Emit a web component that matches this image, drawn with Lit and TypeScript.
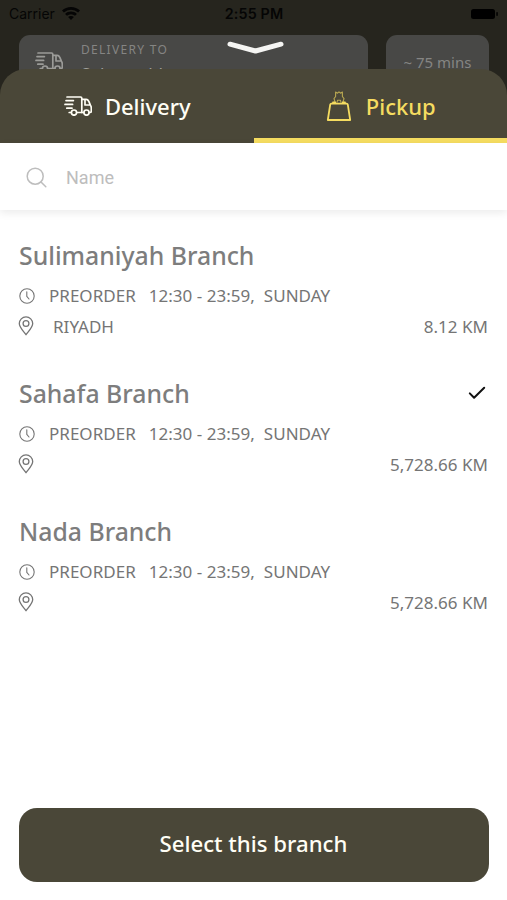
import { LitElement, html, css, svg, nothing } from "lit";
import { customElement, property, state } from "lit/decorators.js";
import { classMap } from "lit/directives/class-map.js";

interface Branch {
  name: string;
  hours: string;
  day: string;
  city: string;
  distance: string;
}

const BRANCHES: Branch[] = [
  { name: "Sulimaniyah Branch", hours: "12:30 - 23:59,", day: "SUNDAY", city: "RIYADH", distance: "8.12 KM" },
  { name: "Sahafa Branch", hours: "12:30 - 23:59,", day: "SUNDAY", city: "", distance: "5,728.66 KM" },
  { name: "Nada Branch", hours: "12:30 - 23:59,", day: "SUNDAY", city: "", distance: "5,728.66 KM" },
];

const truckShapes = svg`
  <path d="M3 1H16.6Q17.8 1 17.8 2.2V16.5H12.8M7.2 16.5H5.2M2 4.6H9.4M1 8.4H8.6M2.8 12.2H8" />
  <path d="M17.8 3.4H22.2C23.6 3.4 24.2 4.2 24.8 5.4L26.4 9.2C27 10 27.3 10.8 27.3 12V15.3Q27.3 16.5 26 16.5H25.2M19.8 16.5H17.8M21 3.6V9H26.2" />
  <circle cx="10" cy="16.6" r="2.6" />
  <circle cx="22.5" cy="16.6" r="2.6" />
`;

const truckIcon = html`<svg class="truck" viewBox="0 0 28 20">${truckShapes}</svg>`;

@customElement("branch-item")
export class BranchItem extends LitElement {
  @property({ attribute: false }) branch!: Branch;
  @property({ type: Boolean }) selected = false;

  static styles = css`
    :host { display: block; height: 138px; color: #757575; }
    .title { display: flex; align-items: center; justify-content: space-between; height: 36px; }
    .name { font-size: 24.8px; font-weight: 500; line-height: 34px; padding-bottom: 2px; color: #7d7d7d; }
    .line { display: flex; align-items: center; height: 30px; font-size: 17px; letter-spacing: 0.02px; white-space: pre; }
    .hours-line { margin-top: 7px; }
    .hours-line span { line-height: 22px; }
    svg { fill: none; stroke: currentColor; stroke-linecap: round; stroke-linejoin: round; flex: none; }
    .clock { width: 16px; height: 16px; margin-right: 14px; margin-top: -1px; stroke-width: 1.1; }
    .pin { width: 16px; height: 20px; margin-left: -1px; margin-right: 19px; stroke-width: 1.3; }
    .check { width: 18px; height: 14px; margin-right: 2px; margin-top: -2px; color: #111; stroke-width: 2; }
    .hours { margin-left: 13px; }
    .day { margin-left: 9px; }
    .distance { margin-left: auto; }
  `;

  render() {
    const b = this.branch;
    return html`
      <div class="title">
        <span class="name">${b.name}</span>
        ${this.selected
          ? html`<svg class="check" viewBox="0 0 18 14"><path d="M1.8 7.4L6.1 11.7L16.2 1.8" /></svg>`
          : nothing}
      </div>
      <div class="line hours-line">
        <svg class="clock" viewBox="0 0 16 16"><circle cx="8" cy="8" r="7.2" /><path d="M7.8 3.8V8.4L10 11" /></svg>
        <span>PREORDER</span><span class="hours">${b.hours}</span><span class="day">${b.day}</span>
      </div>
      <div class="line">
        <svg class="pin" viewBox="0 0 16 20">
          <path d="M8 18.8C6.6 16.2 1.3 11.9 1.3 7.6A6.7 6.7 0 0 1 14.7 7.6C14.7 11.9 9.4 16.2 8 18.8Z" />
          <circle cx="8" cy="7.5" r="2.9" />
        </svg>
        <span>${b.city}</span><span class="distance">${b.distance}</span>
      </div>
    `;
  }
}

@customElement("app-root")
export class AppRoot extends LitElement {
  @state() private mode: "delivery" | "pickup" = "pickup";
  @state() private selected = 1;

  static styles = css`
    :host {
      display: flex; flex-direction: column; height: 900px; overflow: hidden;
      background: #fff; font-family: "Noto Sans", "Open Sans", sans-serif;
    }
    * { box-sizing: border-box; }
    svg { fill: none; stroke: currentColor; stroke-linecap: round; stroke-linejoin: round; flex: none; }
    .backdrop { flex: none; height: 100px; background: #26251e; position: relative; }
    .status {
      display: grid; grid-template-columns: 1fr auto 1fr; align-items: center; height: 35px;
      padding: 0 8px 8px 9px; font: 500 14.3px Inter, sans-serif; color: #050505;
    }
    .carrier { display: flex; align-items: center; gap: 7px; font-weight: 400; font-size: 14px; }
    .time { font-weight: 600; letter-spacing: 0.15px; }
    .wifi { width: 18px; height: 13px; margin-top: -1px; stroke: none; fill: currentColor; }
    .battery { width: 29px; height: 12px; justify-self: end; stroke: none; fill: #000; }
    .cards { display: flex; gap: 18px; padding: 0 18px 0 19px; height: 65px; }
    .card { background: #484846; border-radius: 11px 11px 0 0; color: #858583; }
    .address { flex: 1; display: flex; padding: 17px 0 0 16px; }
    .address .truck { color: #9b9b98; }
    .labels { margin: -11px 0 0 18px; }
    .caption { font-size: 12px; line-height: 18px; letter-spacing: 1.3px; }
    .value { font-size: 17px; line-height: 22px; margin-top: 4px; color: #a0a09d; }
    .eta { width: 103px; padding-top: 16px; text-align: center; font-size: 15px; line-height: 22px; }
    .truck { width: 28px; height: 20px; stroke-width: 1.7; }
    .handle { position: absolute; left: 227px; top: 40px; width: 57px; height: 15px; color: #f5f5f3; stroke-width: 5; }
    .sheet {
      position: relative; flex: 1; margin-top: -31px; display: flex; flex-direction: column;
    }
    .tabs {
      display: grid; grid-template-columns: 1fr 1fr; height: 74px; background: #4a4738; color: #fffef5;
      border-radius: 26px 26px 0 0; flex: none;
    }
    .tab {
      display: flex; align-items: center; justify-content: center; gap: 13px; padding: 5px 0 0 1px;
      font-size: 22px; font-weight: 500; line-height: 30px; border-bottom: 5px solid transparent;
    }
    .tab.active { color: #f5dc60; border-color: #f5dc60; }
    .bag { width: 26px; height: 32px; stroke-width: 1.8; margin-right: 1px; }
    .ribbon { stroke-width: 1.1; opacity: 0.65; }
    .search {
      display: flex; align-items: center; gap: 19px; height: 67px; padding: 2px 0 0 26px; flex: none;
      color: #bdbdbd; font: 18px Roboto, sans-serif; box-shadow: 0 3px 8px rgba(0, 0, 0, 0.08);
    }
    .lens { width: 21px; height: 21px; stroke-width: 1.5; }
    .list { flex: 1; padding: 28px 19px 0; }
    .confirm {
      flex: none; margin: 0 18px 18px 19px; height: 74px; border: 0; border-radius: 18px; padding: 0 1px 4px 0;
      background: #4a4738; color: #fffef5; font: 500 22.2px "Noto Sans", sans-serif;
    }
  `;

  private tab(id: "delivery" | "pickup", icon: unknown, label: string) {
    return html`<div class=${classMap({ tab: true, active: this.mode === id })} @click=${() => (this.mode = id)}>
      ${icon}<span>${label}</span>
    </div>`;
  }

  render() {
    const bag = html`<svg class="bag" viewBox="0 0 26 32">
      <path d="M4.2 14.6Q4.4 13.6 5.4 13.6H20.6Q21.6 13.6 21.8 14.6L24.2 30H1.8Z" />
      <path d="M7 12.4H9.2M16.8 12.4H19" />
      <path class="ribbon" d="M9.6 6.5V2L11.5 3.2L13 1.8L14.5 3.2L16.4 2V6.5M9.6 6.5L8 8.6L9.2 12.5M16.4 6.5L18 8.6L16.8 12.5M11 12.3L11.6 10.2H14.4L15 12.3" />
    </svg>`;
    return html`
      <div class="backdrop">
        <div class="status">
          <span class="carrier">Carrier
            <svg class="wifi" viewBox="0 0 18 13">
              <path d="M9 0C5.5 0 2.4 1.3 0 3.6L1.9 5.6A10.3 10.3 0 0 1 16.1 5.6L18 3.6C15.6 1.3 12.5 0 9 0Z" />
              <path d="M9 4.6C6.7 4.6 4.7 5.4 3.1 6.9L5 8.8A5.9 5.9 0 0 1 13 8.8L14.9 6.9C13.3 5.4 11.3 4.6 9 4.6Z" />
              <path d="M9 9A4.2 4.2 0 0 0 6.1 10.1L9 13L11.9 10.1A4.2 4.2 0 0 0 9 9Z" />
            </svg>
          </span>
          <span class="time">2:55 PM</span>
          <svg class="battery" viewBox="0 0 29 12"><rect x="1" y="1" width="24" height="10" rx="2.5" /><rect x="26.3" y="4" width="1.5" height="4" rx=".7" /></svg>
        </div>
        <div class="cards">
          <div class="card address">
            ${truckIcon}
            <div class="labels">
              <div class="caption">DELIVERY TO</div>
              <div class="value">Select address</div>
            </div>
          </div>
          <div class="card eta">~ 75 mins</div>
        </div>
        <svg class="handle" viewBox="0 0 57 15"><path d="M3 4.2L28.5 11L54 4.2" /></svg>
      </div>
      <div class="sheet">
        <div class="tabs">${this.tab("delivery", truckIcon, "Delivery")}${this.tab("pickup", bag, "Pickup")}</div>
        <div class="search">
          <svg class="lens" viewBox="0 0 21 21"><circle cx="9.2" cy="9.2" r="8" /><path d="M15 15L19.8 19.8" /></svg>
          <span>Name</span>
        </div>
        <div class="list">
          ${BRANCHES.map(
            (b, i) => html`<branch-item .branch=${b} ?selected=${i === this.selected} @click=${() => (this.selected = i)}></branch-item>`
          )}
        </div>
        <button class="confirm">Select this branch</button>
      </div>
    `;
  }
}
